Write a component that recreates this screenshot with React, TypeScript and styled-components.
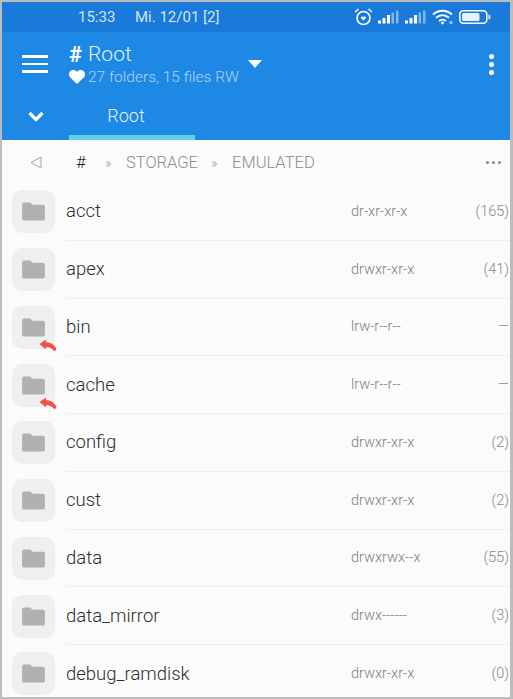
import styled, { createGlobalStyle } from "styled-components";

const GlobalStyle = createGlobalStyle`
  html, body {
    margin: 0;
    padding: 0;
    background: #bcbcbc;
  }
  #root {
    width: 513px;
    height: 699px;
  }
`

const Frame = styled.div`
  box-sizing: border-box;
  width: 513px;
  height: 699px;
  padding: 2px 3px 2px 2px;
  overflow: hidden;
  background: #bcbcbc;
  font-family: Roboto, "Liberation Sans", sans-serif;
  font-weight: 300;
`

const Screen = styled.div`
  height: 695px;
  overflow: hidden;
  background: #fbfbfb;
`

const StatusBar = styled.div`
  display: flex;
  align-items: center;
  height: 30px;
  padding: 0 19px 0 76px;
  background: #1a7ada;
  color: rgba(255, 255, 255, 0.82);
  font-size: 15px;
  font-weight: 400;
`

const Clock = styled.span`
  width: 57px;
`

const StatusIcons = styled.div`
  display: flex;
  align-items: center;
  gap: 5px;
  margin-left: auto;
`

const Header = styled.header`
  background: #1e88e5;
  color: white;
`

const Toolbar = styled.div`
  display: flex;
  align-items: center;
  height: 64px;
`

const MenuButton = styled.div`
  display: flex;
  flex-direction: column;
  gap: 5px;
  width: 26px;
  margin: 0 21px 0 20px;

  span {
    height: 2.5px;
    background: white;
  }
`

const TitleBlock = styled.div`
  display: flex;
  flex-direction: column;
  width: 174px;
`

const Title = styled.div`
  display: flex;
  align-items: center;
  gap: 6px;
  height: 26px;
  font-size: 21px;
  color: rgba(255, 255, 255, 0.92);

  b {
    color: white;
    font-size: 22px;
    font-weight: 700;
  }
`

const Subtitle = styled.div`
  display: flex;
  align-items: center;
  gap: 3px;
  height: 20px;
  font-size: 15.5px;
  color: rgba(255, 255, 255, 0.65);
`

const Caret = styled.div`
  width: 0;
  height: 0;
  margin-left: 5px;
  border-left: 7px solid transparent;
  border-right: 7px solid transparent;
  border-top: 8px solid white;
`

const MoreButton = styled.div`
  display: flex;
  flex-direction: column;
  gap: 3px;
  margin-left: auto;
  margin-right: 16px;

  span {
    width: 5px;
    height: 5px;
    border-radius: 50%;
    background: white;
  }
`

const Tabs = styled.div`
  display: flex;
  height: 44px;
`

const TabToggle = styled.div`
  display: flex;
  align-items: flex-start;
  justify-content: center;
  width: 67px;
  padding-top: 15px;
`

const Tab = styled.div`
  box-sizing: border-box;
  width: 126px;
  height: 44px;
  padding: 9px 12px 0 0;
  border-bottom: 5px solid #64d0e8;
  text-align: center;
  font-size: 18px;
  color: rgba(255, 255, 255, 0.92);
`

const Breadcrumb = styled.nav`
  display: flex;
  align-items: center;
  box-sizing: border-box;
  height: 43px;
  padding-top: 2px;
  font-size: 16.5px;
  color: #8e8e8e;
`

const Back = styled.span`
  display: flex;
  width: 74px;
  padding-left: 28px;
  box-sizing: border-box;
`

const Hash = styled.span`
  width: 29px;
  color: #1e1e1e;
`

const Chevron = styled.span`
  width: 21px;
  font-size: 14px;
  color: #9c9c9c;
`

const Crumb = styled.span<{ $width: number }>`
  width: ${(p) => p.$width}px;
`

const Dots = styled.div`
  display: flex;
  gap: 2.5px;
  margin-left: auto;
  margin-right: 9px;

  span {
    width: 3.5px;
    height: 3.5px;
    border-radius: 50%;
    background: #8a8a8a;
  }
`

const List = styled.ul`
  margin: 0;
  padding: 0;
  list-style: none;
`

const Row = styled.li`
  display: flex;
  align-items: center;
  height: 57.75px;
  padding-left: 10px;
`

const IconBox = styled.div`
  position: relative;
  display: flex;
  flex-shrink: 0;
  align-items: center;
  justify-content: center;
  width: 43px;
  height: 43px;
  border-radius: 10px;
  background: #efefef;
`

const LinkBadge = styled.svg`
  position: absolute;
  right: -2px;
  bottom: -3px;
`

const RowBody = styled.div<{ $last: boolean }>`
  display: flex;
  align-items: center;
  align-self: stretch;
  flex: 1;
  margin-left: 11px;
  padding-right: 1px;
  border-bottom: ${(p) => (p.$last ? "none" : "1px solid #eeeeee")};
`

const Name = styled.span`
  width: 285px;
  font-size: 18.5px;
  color: #2e2e2e;
`

const Perms = styled.span`
  font-size: 14.5px;
  color: #808080;
`

const Count = styled.span`
  margin-left: auto;
  font-size: 14.5px;
  color: #888888;
`

const rows = [
    { name: "acct", perms: "dr-xr-xr-x", count: "(165)" },
    { name: "apex", perms: "drwxr-xr-x", count: "(41)" },
    { name: "bin", perms: "lrw-r--r--", count: "—", link: true },
    { name: "cache", perms: "lrw-r--r--", count: "—", link: true },
    { name: "config", perms: "drwxr-xr-x", count: "(2)" },
    { name: "cust", perms: "drwxr-xr-x", count: "(2)" },
    { name: "data", perms: "drwxrwx--x", count: "(55)" },
    { name: "data_mirror", perms: "drwx------", count: "(3)" },
    { name: "debug_ramdisk", perms: "drwxr-xr-x", count: "(0)" },
]

const FolderIcon = () => (
    <svg width="23" height="19" viewBox="0 0 24 20">
        <path d="M2 0.5h6.5l2.5 2.5h11a2 2 0 0 1 2 2v12.5a2 2 0 0 1-2 2H2a2 2 0 0 1-2-2V2.5a2 2 0 0 1 2-2z" fill="#b0b0b0" />
    </svg>
)

const LinkArrow = () => (
    <LinkBadge width="18" height="13" viewBox="0 0 18 13">
        <path d="M0.5 5L7 0.5V3.2C12 3.2 15.5 5.8 17.5 10L15.5 12.5C13.5 9.5 10.5 8 7 8V10.5z" fill="#f4504a" />
    </LinkBadge>
)

const BackArrow = () => (
    <svg width="12" height="13" viewBox="0 0 12 13" fill="none" stroke="#a4a4a4" strokeWidth="1">
        <path d="M11 1v11L1 6.5z" />
    </svg>
)

const Signal = () => (
    <svg width="22" height="14" viewBox="0 0 22 14">
        <rect x="0" y="10.5" width="3" height="3" fill="#fff" />
        <rect x="4.5" y="8" width="3" height="5.5" fill="#fff" />
        <rect x="9" y="5" width="3" height="8.5" fill="#fff" />
        <rect x="13.5" y="2.5" width="2.5" height="11" fill="#fff" opacity="0.45" />
        <rect x="18" y="0.5" width="2.5" height="13" fill="#fff" opacity="0.45" />
    </svg>
)

const Alarm = () => (
    <svg width="19" height="18" viewBox="0 0 19 18" fill="none" stroke="#fff">
        <circle cx="9.5" cy="10" r="6.5" strokeWidth="1.6" />
        <path d="M1 4l3.5-3M18 4l-3.5-3" strokeWidth="1.5" />
        <path d="M9.5 12.5L7 10a1.4 1.4 0 0 1 2.5-1 1.4 1.4 0 0 1 2.5 1z" fill="#fff" stroke="none" />
    </svg>
)

const Wifi = () => (
    <svg width="22" height="16" viewBox="0 0 22 16" fill="none" stroke="#fff" strokeWidth="1.8">
        <path d="M1 5.5C6.5 0.5 14.5 0.5 20 5.5" />
        <path d="M4 8.8C8 5.3 13 5.3 17 8.8" />
        <path d="M7 12C9.2 10.2 11.8 10.2 14 12" />
        <circle cx="10.5" cy="14" r="1.4" fill="#fff" stroke="none" />
        <rect x="17.5" y="12" width="3" height="3" fill="#fff" stroke="none" opacity="0.5" />
    </svg>
)

const Battery = () => (
    <svg width="32" height="14" viewBox="0 0 32 14">
        <rect x="0.8" y="0.8" width="27" height="12.4" rx="3.5" fill="none" stroke="#fff" strokeWidth="1.5" />
        <rect x="3" y="3" width="17.5" height="8" rx="1.5" fill="#fff" opacity="0.9" />
        <path d="M29.5 4.5c1.5 0 2 1 2 2.5s-.5 2.5-2 2.5z" fill="#fff" opacity="0.85" />
    </svg>
)

const Heart = () => (
    <svg width="16" height="14" viewBox="0 0 16 14">
        <path d="M8 14L1.3 7.4C-0.6 5.4-0.3 2.4 1.5 1 3.5-0.5 6.4-0.1 8 2 9.6-0.1 12.5-0.5 14.5 1c1.8 1.4 2.1 4.4 0.2 6.4z" fill="#fff" />
    </svg>
)

const ChevronDown = () => (
    <svg width="16" height="11" viewBox="0 0 16 11" fill="none" stroke="#fff" strokeWidth="3.2">
        <path d="M1.5 2l6.5 6.5L14.5 2" />
    </svg>
)

const App = () => {
    return (
        <Frame>
            <GlobalStyle />
            <Screen>
                <StatusBar>
                    <Clock>15:33</Clock>
                    <span>Mi. 12/01 [2]</span>
                    <StatusIcons>
                        <Alarm />
                        <Signal />
                        <Signal />
                        <Wifi />
                        <Battery />
                    </StatusIcons>
                </StatusBar>
                <Header>
                    <Toolbar>
                        <MenuButton>
                            <span />
                            <span />
                            <span />
                        </MenuButton>
                        <TitleBlock>
                            <Title><b>#</b> Root</Title>
                            <Subtitle><Heart /> 27 folders, 15 files RW</Subtitle>
                        </TitleBlock>
                        <Caret />
                        <MoreButton>
                            <span />
                            <span />
                            <span />
                        </MoreButton>
                    </Toolbar>
                    <Tabs>
                        <TabToggle><ChevronDown /></TabToggle>
                        <Tab>Root</Tab>
                    </Tabs>
                </Header>
                <Breadcrumb>
                    <Back><BackArrow /></Back>
                    <Hash>#</Hash>
                    <Chevron>»</Chevron>
                    <Crumb $width={85}>STORAGE</Crumb>
                    <Chevron>»</Chevron>
                    <Crumb $width={90}>EMULATED</Crumb>
                    <Dots>
                        <span />
                        <span />
                        <span />
                    </Dots>
                </Breadcrumb>
                <List>
                    {rows.map((row, i) => (
                        <Row key={row.name}>
                            <IconBox>
                                <FolderIcon />
                                {row.link && <LinkArrow />}
                            </IconBox>
                            <RowBody $last={i === rows.length - 1}>
                                <Name>{row.name}</Name>
                                <Perms>{row.perms}</Perms>
                                <Count>{row.count}</Count>
                            </RowBody>
                        </Row>
                    ))}
                </List>
            </Screen>
        </Frame>
    )
}

export default App
